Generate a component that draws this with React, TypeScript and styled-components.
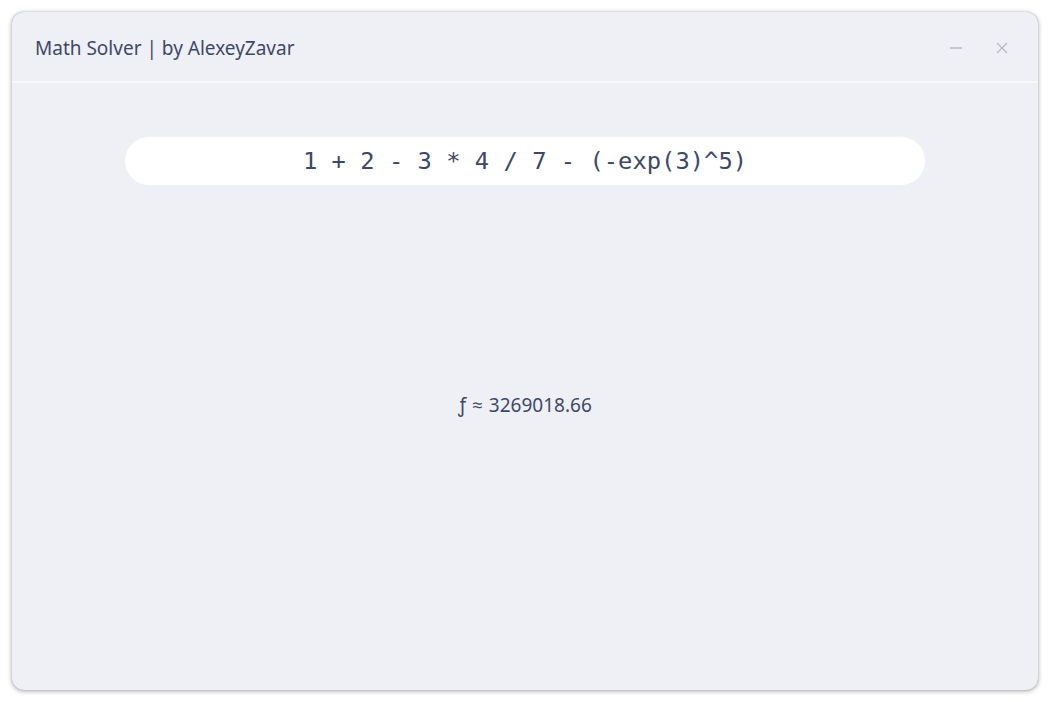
import React from "react";
import styled, { createGlobalStyle } from "styled-components";

const Global = createGlobalStyle`
  html, body { margin: 0; padding: 0; background: #ffffff; }
  body { width: 1050px; height: 702px; overflow: hidden; font-family: "Noto Sans", "Open Sans", sans-serif; }
`;

const Page = styled.div`
  padding: 12px 12px 0 12px;
  width: 1050px;
  height: 702px;
  box-sizing: border-box;
`;

const Window = styled.div`
  width: 1026px;
  height: 678px;
  background: #eff0f5;
  border-radius: 12px;
  box-shadow: 0 1px 5px rgba(0, 0, 0, 0.35), 0 0 1px rgba(0, 0, 0, 0.3);
  display: flex;
  flex-direction: column;
  overflow: hidden;
`;

const TitleBar = styled.div`
  height: 69px;
  display: flex;
  align-items: center;
  justify-content: space-between;
  padding: 0 26px 0 23px;
  border-bottom: 2px solid #f7f8fb;
`;

const Title = styled.div`
  font-size: 19px;
  color: #3d4868;
  padding-top: 2px;
`;

const Controls = styled.div`
  display: flex;
  align-items: center;
  gap: 26px;
  padding-top: 2px;
`;

const ControlButton = styled.button`
  width: 20px;
  height: 20px;
  padding: 0;
  border: none;
  background: transparent;
  display: flex;
  align-items: center;
  justify-content: center;
  color: #b5b9c9;
`;

const Body = styled.div`
  flex: 1;
  display: flex;
  flex-direction: column;
  align-items: center;
  padding-top: 54px;
`;

const Input = styled.input`
  width: 800px;
  height: 48px;
  box-sizing: border-box;
  border: none;
  outline: none;
  border-radius: 24px;
  background: #ffffff;
  text-align: center;
  font-family: "DejaVu Sans Mono", "Liberation Mono", monospace;
  font-size: 23.8px;
  color: #3d4868;
`;

const Result = styled.div`
  margin-top: 207px;
  font-size: 19px;
  word-spacing: 1px;
  color: #3d4868;
`;

export default function App() {
  return (
    <>
      <Global />
      <Page>
        <Window>
          <TitleBar>
            <Title>Math Solver | by AlexeyZavar</Title>
            <Controls>
              <ControlButton aria-label="minimize">
                <svg width="14" height="14" viewBox="0 0 14 14">
                  <line x1="1" y1="7" x2="13" y2="7" stroke="currentColor" strokeWidth="1.4" />
                </svg>
              </ControlButton>
              <ControlButton aria-label="close">
                <svg width="14" height="14" viewBox="0 0 14 14">
                  <line x1="2" y1="2" x2="12" y2="12" stroke="currentColor" strokeWidth="1.3" />
                  <line x1="12" y1="2" x2="2" y2="12" stroke="currentColor" strokeWidth="1.3" />
                </svg>
              </ControlButton>
            </Controls>
          </TitleBar>
          <Body>
            <Input readOnly value="1 + 2 - 3 * 4 / 7 - (-exp(3)^5)" />
            <Result>ƒ ≈ 3269018.66</Result>
          </Body>
        </Window>
      </Page>
    </>
  );
}
